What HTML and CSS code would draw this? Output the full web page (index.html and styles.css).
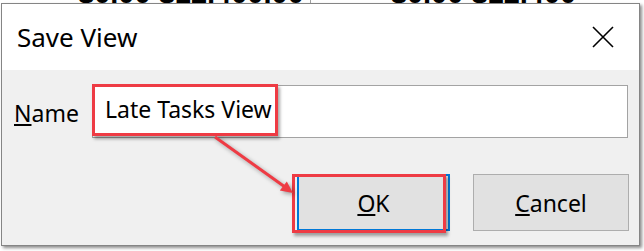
FILE: index.html
```html
<!DOCTYPE html>
<html lang="en">

<head>
    <meta charset="UTF-8">
    <title>Save View</title>
    <link rel="stylesheet" href="styles.css">
</head>

<body>
    <div class="backdrop">
        <span class="cell first">$0.00 $12,400.00</span>
        <span class="cell second">$0.00 $12,400</span>
    </div>

    <div class="dialog">
        <div class="titlebar">
            <span class="title">Save View</span>
            <svg class="close" width="22" height="22" viewBox="0 0 22 22">
                <path d="M1 1 L21 21 M21 1 L1 21" stroke="#000" stroke-width="1.6" fill="none" />
            </svg>
        </div>

        <div class="content">
            <div class="field-row">
                <label class="field-label"><u>N</u>ame</label>
                <div class="textbox">Late Tasks View</div>
            </div>

            <div class="buttons">
                <button class="btn btn-default"><u>O</u>K</button>
                <button class="btn btn-cancel"><u>C</u>ancel</button>
            </div>
        </div>

        <!-- red callout annotations -->
        <div class="mark mark-input"></div>
        <div class="mark mark-ok"></div>
        <svg class="arrow" width="637" height="241" viewBox="0 0 637 241">
            <line x1="213" y1="133" x2="283" y2="183" stroke="#ee3b44" stroke-width="3" />
            <polygon points="291,189 277.8,186.6 284.8,177.4" fill="#ee3b44" />
        </svg>
    </div>
</body>

</html>
```

FILE: styles.css
```css
* {
    margin: 0;
    padding: 0;
    box-sizing: border-box;
}

body {
    font-family: 'Noto Sans', 'Open Sans', sans-serif;
    background-color: #fff;
    color: #000;
    width: 644px;
    height: 251px;
    overflow: hidden;
}

/* spreadsheet behind the dialog, only its bottom edge shows */
.backdrop {
    height: 3px;
    overflow: hidden;
    position: relative;
    display: flex;
}

.backdrop .cell {
    font-family: 'Liberation Sans', sans-serif;
    font-weight: bold;
    font-size: 29px;
    line-height: 29px;
    margin-top: -21px;
    white-space: nowrap;
}

.backdrop .first {
    margin-left: 78px;
    padding-right: 6px;
    border-right: 1px solid #a0a0a0;
}

.backdrop .second {
    margin-left: 80px;
}

.dialog {
    position: relative;
    margin-left: 1px;
    width: 639px;
    height: 243px;
    border: 1px solid #858585;
    box-shadow: 2px 2px 3px rgba(0, 0, 0, 0.45);
    background-color: #f0f0f0;
}

.titlebar {
    height: 66px;
    background-color: #fff;
    display: flex;
    justify-content: space-between;
    align-items: flex-start;
    padding: 20px 25px 0 15px;
}

.title {
    font-size: 26px;
    line-height: 26px;
}

.close {
    margin-top: 2px;
}

.content {
    padding: 15px 10px 0 12px;
}

.field-row {
    display: flex;
    align-items: flex-start;
}

.field-label {
    width: 78px;
    font-size: 23px;
    line-height: 53px;
    padding-top: 2px;
}

.textbox {
    width: 536px;
    height: 53px;
    background-color: #fff;
    border: 1px solid #a3a3a3;
    font-size: 23px;
    line-height: 47px;
    padding: 0 12px;
}

.buttons {
    display: flex;
    justify-content: flex-end;
    gap: 23px;
    margin-top: 34px;
}

.btn {
    height: 57px;
    font-family: 'Noto Sans', 'Open Sans', sans-serif;
    font-size: 23px;
    color: #000;
    background-color: #e1e1e1;
    border: 1px solid #adadad;
}

.btn-default {
    width: 153px;
    border: 2px solid #0078d7;
}

.btn-cancel {
    width: 156px;
}

.mark {
    position: absolute;
    border: 3px solid #ee3b44;
    box-shadow: 2px 3px 3px rgba(0, 0, 0, 0.35);
}

.mark-input {
    left: 90px;
    top: 80px;
    width: 186px;
    height: 52px;
}

.mark-ok {
    left: 290px;
    top: 170px;
    width: 154px;
    height: 59px;
}

.arrow {
    position: absolute;
    left: 0;
    top: 0;
    filter: drop-shadow(2px 2px 2px rgba(0, 0, 0, 0.35));
}
```
